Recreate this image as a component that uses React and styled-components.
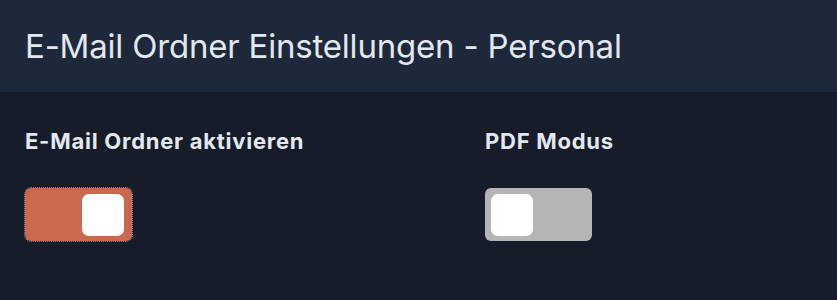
import React, { useState } from "react";
import styled, { createGlobalStyle } from "styled-components";

const GlobalStyle = createGlobalStyle`
  body {
    margin: 0;
    background: #161c29;
    font-family: Inter, "Noto Sans", sans-serif;
  }
`;

const Panel = styled.div`
  width: 837px;
  height: 300px;
  background: #161c29;
  display: flex;
  flex-direction: column;
`;

const Header = styled.div`
  height: 92px;
  background: #1e283b;
  display: flex;
  align-items: center;
  padding: 0 25px;
  box-sizing: border-box;
`;

const Title = styled.h2`
  margin: 0;
  font-size: 33px;
  font-weight: 400;
  color: #e2e8f0;
  letter-spacing: -0.2px;
`;

const Body = styled.div`
  display: grid;
  grid-template-columns: 460px 1fr;
  padding: 36px 25px 0;
`;

const Field = styled.div`
  display: flex;
  flex-direction: column;
  align-items: flex-start;
  gap: 34px;
`;

const Label = styled.label`
  font-size: 22px;
  font-weight: 700;
  color: #e2e8f0;
  line-height: 26px;
  letter-spacing: 0.75px;
`;

const Track = styled.button`
  width: 107px;
  height: 53px;
  border: none;
  padding: 6px;
  border-radius: 6px;
  background: ${(p) => (p.$on ? "#c96a4e" : "#b5b5b5")};
  display: flex;
  justify-content: ${(p) => (p.$on ? "flex-end" : "flex-start")};
  align-items: center;
  cursor: pointer;
  outline: ${(p) => (p.$focus ? "1px dotted #8a8f99" : "none")};
  box-sizing: border-box;
`;

const Knob = styled.span`
  width: 42px;
  height: 42px;
  border-radius: 7px;
  background: #ffffff;
  margin-right: ${(p) => (p.$on ? "2px" : "0")};
`;

function Toggle({ on, focus, onChange }) {
  return (
    <Track $on={on} $focus={focus} onClick={onChange}>
      <Knob $on={on} />
    </Track>
  );
}

export default function App() {
  const [active, setActive] = useState(true);
  const [pdf, setPdf] = useState(false);
  return (
    <Panel>
      <GlobalStyle />
      <Header>
        <Title>E-Mail Ordner Einstellungen - Personal</Title>
      </Header>
      <Body>
        <Field>
          <Label>E-Mail Ordner aktivieren</Label>
          <Toggle on={active} focus onChange={() => setActive(!active)} />
        </Field>
        <Field>
          <Label>PDF Modus</Label>
          <Toggle on={pdf} onChange={() => setPdf(!pdf)} />
        </Field>
      </Body>
    </Panel>
  );
}
